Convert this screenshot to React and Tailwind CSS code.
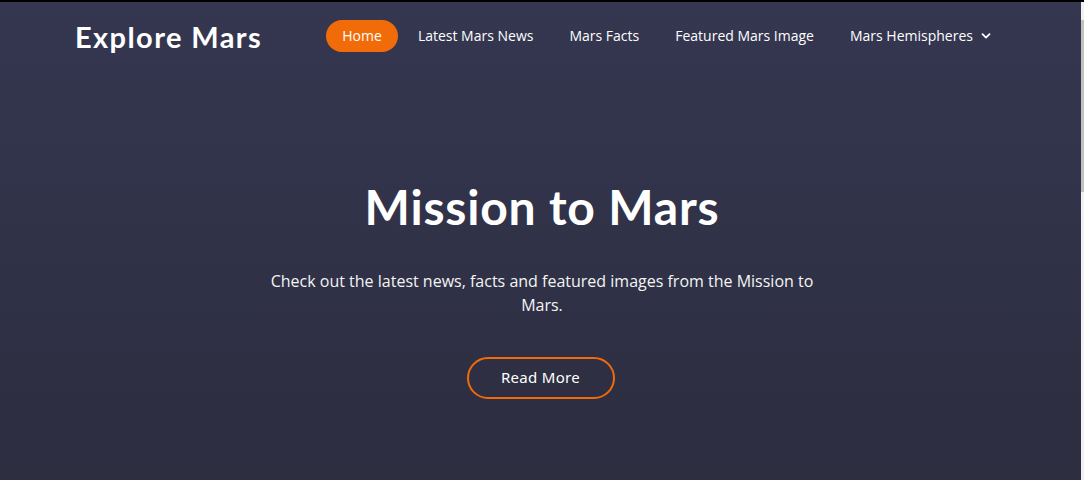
import React from 'react';

const links = ['Latest Mars News', 'Mars Facts', 'Featured Mars Image'];

const Header = () => {
    return (
        <header className="py-[18px]">
            <div className="mx-auto max-w-[960px] px-[15px] flex items-center justify-between">
                <a href="#" className="-ml-[2px] text-[29px] font-bold text-white tracking-[1.4px] font-['Lato',sans-serif] leading-none">
                    Explore Mars
                </a>
                <nav className="flex items-center gap-1 text-[14px] text-white font-['Open_Sans',sans-serif]">
                    <a href="#" className="h-8 px-4 pb-px flex items-center rounded-full bg-[#f26b09]">
                        Home
                    </a>
                    {links.map((l) => (
                        <a key={l} href="#" className="h-8 px-4 pb-px flex items-center">
                            {l}
                        </a>
                    ))}
                    <a href="#" className="h-8 pl-4 pr-[16px] pb-px flex items-center gap-2">
                        Mars Hemispheres
                        <svg width="10" height="10" viewBox="0 0 10 10" fill="none">
                            <path d="M1.5 3.2 5 6.6l3.5-3.4" stroke="white" strokeWidth="1.8" strokeLinecap="round" strokeLinejoin="round" />
                        </svg>
                    </a>
                </nav>
            </div>
        </header>
    );
};

const Hero = () => {
    return (
        <section className="pt-[108px] text-center">
            <h1 className="text-[48px] font-bold text-white leading-[1.2] tracking-[0.8px] font-['Lato',sans-serif]">
                Mission to Mars
            </h1>
            <p className="mx-auto mt-[33px] max-w-[560px] text-[16px] leading-6 text-[#f4f4f4] font-['Open_Sans',sans-serif]">
                Check out the latest news, facts and featured images from the Mission to Mars.
            </p>
            <a href="#" className="mt-[40px] ml-[-3px] inline-flex items-center justify-center w-[148px] h-[42px] rounded-full border-2 border-[#f26b09] text-[15px] font-normal tracking-[0.3px] text-white font-['Noto_Sans',sans-serif]">
                Read More
            </a>
        </section>
    );
};

export default function App() {
    return (
        <div className="relative h-[480px] overflow-hidden border-t-2 border-black bg-gradient-to-b from-[#353751] to-[#2c2d3f]">
            <Header />
            <Hero />
            <div className="absolute top-0 right-0 w-[3px] h-full bg-[#f1f1f1]">
                <div className="mt-[18px] h-[172px] bg-[#c1c1c1]"></div>
            </div>
        </div>
    );
}
